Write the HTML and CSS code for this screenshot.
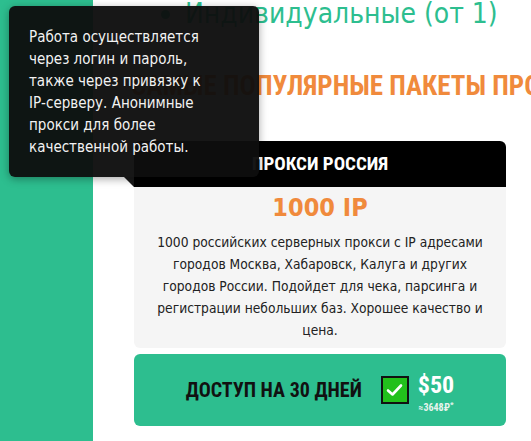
FILE: index.html
```html
<!DOCTYPE html>
<html lang="ru">

<head>
    <meta charset="UTF-8">
    <meta name="viewport" content="width=device-width, initial-scale=1.0">
    <title>Прокси Россия</title>
    <link rel="stylesheet" href="styles.css">
</head>

<body>
    <div class="page">
        <aside class="side"></aside>

        <main class="main">
            <ul class="types">
                <li>Индивидуальные (от 1)</li>
            </ul>

            <h2 class="title">САМЫЕ ПОПУЛЯРНЫЕ ПАКЕТЫ ПРОКСИ</h2>

            <div class="card">
                <div class="card-head">ПРОКСИ РОССИЯ</div>
                <div class="card-body">
                    <div class="amount">1000 IP</div>
                    <p>1000 российских серверных прокси с IP адресами городов Москва, Хабаровск, Калуга и других городов России. Подойдет для чека, парсинга и регистрации небольших баз. Хорошее качество и цена.</p>
                </div>
                <a class="buy" href="#">
                    <span class="buy-label">ДОСТУП НА 30 ДНЕЙ</span>
                    <span class="check">
                        <svg width="17" height="14" viewBox="0 0 17 14">
                            <path d="M2 7.5 L6.5 11.5 L15 2.5" fill="none" stroke="#fff" stroke-width="2.6" stroke-linecap="round" stroke-linejoin="round"/>
                        </svg>
                    </span>
                    <span class="price">
                        <span class="usd">$50</span>
                        <span class="rub">≈3648₽<sup>*</sup></span>
                    </span>
                </a>
            </div>
        </main>

        <!-- tooltip over the header -->
        <div class="tip">
            Работа осуществляется через логин и пароль, также через привязку к IP&#8209;серверу. Анонимные прокси для более качественной работы.
        </div>
    </div>
</body>

</html>
```

FILE: styles.css
```css
html,
body {
    margin: 0;
    height: 100%;
    overflow: hidden;
}

body {
    font-family: "DejaVu Sans Condensed", "DejaVu Sans", sans-serif;
    background-color: #ffffff;
    color: #222222;
}

.page {
    position: relative;
    display: flex;
    height: 100%;
}

.side {
    flex: 0 0 93px;
    background-color: #2dbe8f;
}

.main {
    flex: 1;
    min-width: 0;
    overflow: hidden;
}

.types {
    margin: -4px 0 0;
    padding-left: 92px;
    color: #2dbe8f;
    font-size: 28px;
    line-height: 36px;
}

.title {
    margin: 39px 0 0;
    padding-left: 38px;
    white-space: nowrap;
    font-family: "Roboto Condensed", "Liberation Sans Narrow", "DejaVu Sans Condensed", sans-serif;
    font-weight: bold;
    font-size: 27px;
    line-height: 30px;
    color: #f08a3c;
}

.card {
    width: 372px;
    margin: 40px 0 0 41px;
}

.card-head {
    height: 46px;
    line-height: 46px;
    text-align: center;
    background-color: #000000;
    color: #ffffff;
    border-radius: 6px 6px 0 0;
    font-family: "Roboto Condensed", "Liberation Sans Narrow", "DejaVu Sans Condensed", sans-serif;
    font-weight: bold;
    font-size: 19px;
}

.card-body {
    background-color: #f5f5f5;
    border-radius: 0 0 6px 6px;
    padding: 6px 14px 7px;
    text-align: center;
}

.amount {
    color: #f08a3c;
    font-weight: bold;
    font-size: 25px;
    line-height: 30px;
}

.card-body p {
    margin: 8px 0 0;
    font-size: 13.7px;
    line-height: 22px;
}

.buy {
    display: flex;
    align-items: center;
    justify-content: center;
    height: 72px;
    margin-top: 6px;
    background-color: #2dbe8f;
    border-radius: 6px;
    text-decoration: none;
}

.buy-label {
    font-family: "Roboto Condensed", "Liberation Sans Narrow", "DejaVu Sans Condensed", sans-serif;
    font-weight: bold;
    font-size: 20px;
    color: #111111;
}

.check {
    display: flex;
    align-items: center;
    justify-content: center;
    width: 24px;
    height: 24px;
    margin-left: 19px;
    background-color: #22c01c;
    border: 2px solid #111111;
}

.price {
    display: flex;
    flex-direction: column;
    align-items: center;
    margin: 8px 0 0 9px;
    font-family: "Roboto Condensed", "Liberation Sans Narrow", "DejaVu Sans Condensed", sans-serif;
    font-weight: bold;
    color: #ffffff;
}

.usd {
    font-size: 24px;
    line-height: 25px;
}

.rub {
    font-size: 10px;
    line-height: 14px;
    color: #e8f4ee;
}

.rub sup {
    font-size: 8px;
}

.tip {
    position: absolute;
    left: 9px;
    top: 6px;
    box-sizing: border-box;
    width: 250px;
    height: 171px;
    padding: 20px 32px 0 20px;
    background-color: rgba(14, 14, 14, 0.96);
    border-radius: 6px;
    box-shadow: 0 2px 8px rgba(0, 0, 0, 0.35);
    color: #f2f2f2;
    font-size: 15px;
    line-height: 22px;
}

.tip::after {
    content: "";
    position: absolute;
    left: 115px;
    top: 100%;
    border-top: 10px solid rgba(14, 14, 14, 0.96);
    border-left: 10px solid transparent;
}
```
